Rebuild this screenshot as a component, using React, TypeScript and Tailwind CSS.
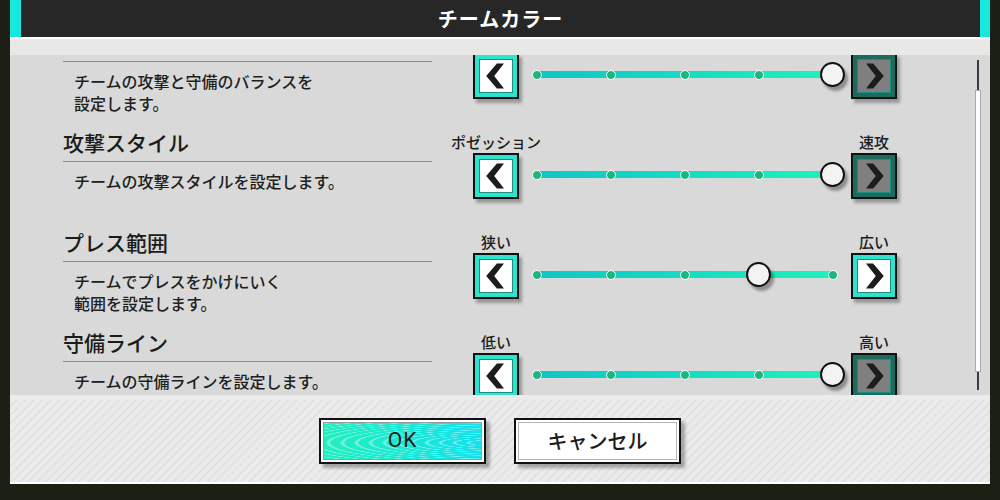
import React from 'react';

type Row = {
  title: string;
  desc: string[];
  left: string;
  right: string;
  value: number; // 0..4
};

// first row is scrolled up: its heading and labels sit above the visible area
const rows: Row[] = [
  { title: '', desc: ['チームの攻撃と守備のバランスを', '設定します。'], left: '', right: '', value: 4 },
  { title: '攻撃スタイル', desc: ['チームの攻撃スタイルを設定します。'], left: 'ポゼッション', right: '速攻', value: 4 },
  { title: 'プレス範囲', desc: ['チームでプレスをかけにいく', '範囲を設定します。'], left: '狭い', right: '広い', value: 3 },
  { title: '守備ライン', desc: ['チームの守備ラインを設定します。'], left: '低い', right: '高い', value: 4 },
];

const jp = "font-['Noto_Sans_CJK_JP','Noto_Sans',sans-serif]";

const Chevron: React.FC<{ dir: 'left' | 'right' }> = ({ dir }) => (
  <svg width="36" height="36" viewBox="0 0 36 36">
    {dir === 'left' ? (
      <polygon points="7,18 19,4 27,4 16,18 27,32 19,32" fill="#1c1c1c" />
    ) : (
      <polygon points="29,18 17,4 9,4 20,18 9,32 17,32" fill="#1c1c1c" />
    )}
  </svg>
);

const ArrowButton: React.FC<{ dir: 'left' | 'right'; disabled?: boolean }> = ({ dir, disabled }) => (
  <button
    className={
      'w-[46px] h-[46px] shrink-0 border-2 border-[#111] p-[4px] shadow-[3px_4px_3px_rgba(0,0,0,0.3)] ' +
      (disabled ? 'bg-[#1d6b5d]' : 'bg-[#2fe3cf]')
    }
  >
    <div
      className={
        'w-full h-full flex items-center justify-center border border-[#1a8f80] ' +
        (disabled ? 'bg-[#7f7f7f]' : 'bg-white')
      }
    >
      <Chevron dir={dir} />
    </div>
  </button>
);

const Slider: React.FC<{ value: number }> = ({ value }) => (
  <div className="flex-1 px-[18px] -mt-[4px]">
    <div className="relative h-[8px]">
      <div className="absolute inset-x-0 top-[1px] h-[7px] rounded-full bg-gradient-to-r from-[#0fc6c6] to-[#1ef2bc]" />
      {[0, 1, 2, 3, 4].map((i) => (
        <div
          key={i}
          className="absolute -top-[0.5px] w-[10px] h-[10px] -ml-[5px] rounded-full bg-[#1fb67e] border border-white"
          style={{ left: `${i * 25}%` }}
        />
      ))}
      <div
        className="absolute -top-[8px] w-[25px] h-[25px] -ml-[13px] rounded-full border-2 border-[#111] bg-[#f3f3f3] shadow-[3px_4px_3px_rgba(0,0,0,0.35)]"
        style={{ left: `${value * 25}%` }}
      />
    </div>
  </div>
);

const SettingRow: React.FC<{ row: Row }> = ({ row }) => (
  <div className="flex h-[100px]">
    <div className="w-[369px]">
      <div className="h-[31px] border-b border-[#8d8d8d] text-[21px] leading-[22px] font-medium text-[#1b1b1b]">
        {row.title}
      </div>
      <div className="mt-[8px] pl-[11px] text-[16px] leading-[22px] font-medium text-[#1e1e1e]">
        {row.desc.map((d) => (
          <div key={d}>{d}</div>
        ))}
      </div>
    </div>
    <div className="ml-[41px] w-[424px]">
      <div className="flex h-[22px] justify-between text-[15px] leading-[22px] font-medium text-[#1b1b1b]">
        <div className="w-[46px] flex justify-center whitespace-nowrap">{row.left}</div>
        <div className="w-[46px] flex justify-center whitespace-nowrap">{row.right}</div>
      </div>
      <div className="flex items-center h-[46px]">
        <ArrowButton dir="left" disabled={row.value === 0} />
        <Slider value={row.value} />
        <ArrowButton dir="right" disabled={row.value === 4} />
      </div>
    </div>
  </div>
);

export default function App() {
  return (
    <div className={`w-[1000px] h-[500px] bg-[#1c1f14] overflow-hidden ${jp}`}>
      <div className="mx-[10px] w-[980px]">
        {/* header */}
        <div className="flex h-[37px]">
          <div className="w-[11px] bg-[#16e8de]" />
          <div className="flex-1 bg-[#272727] flex items-center justify-center text-white text-[20px] font-bold tracking-[1px]">
            チームカラー
          </div>
          <div className="w-[10px] bg-[#16e8de]" />
        </div>
        <div className="h-[18px] border-t-2 border-white bg-[#e8e8e6]" />

        {/* content */}
        <div className="relative h-[340px] bg-[#d9d9d9] overflow-hidden">
          <div className="pl-[53px] -mt-[24px]">
            {rows.map((r, i) => (
              <SettingRow key={i} row={r} />
            ))}
          </div>
          <div className="absolute left-[964px] top-[5px] flex flex-col items-center w-[8px]">
            <div className="w-[2px] h-[30px] bg-[#3c3c3c]" />
            <div className="w-[6px] h-[282px] bg-white border border-[#a9a9a9]" />
            <div className="w-[2px] h-[18px] bg-[#3c3c3c]" />
          </div>
        </div>

        {/* footer */}
        <div className="h-[89px] border-b-2 border-white bg-[#ebebeb] pt-[5px]">
          <div className="h-full flex items-center justify-center gap-[28px] bg-[image:repeating-linear-gradient(135deg,#ebebeb_0px,#ebebeb_4px,#e2e2e2_4px,#e2e2e2_6px)]">
            <button className="w-[167px] h-[46px] border-2 border-[#111] bg-white p-[2px] shadow-[4px_4px_3px_rgba(0,0,0,0.3)]">
              <div className="w-full h-full flex items-center justify-center border border-[#9a9a9a] bg-[image:repeating-radial-gradient(ellipse_at_108%_55%,rgba(255,255,255,0)_0px,rgba(255,255,255,0)_8px,rgba(255,255,255,0.45)_11px,rgba(255,255,255,0)_14px),linear-gradient(90deg,#22efbf,#18e8d6_55%,#12e2ee)] text-[21px] font-normal text-[#1b1b1b] font-['Roboto',sans-serif] tracking-[1px]">
                OK
              </div>
            </button>
            <button className="w-[167px] h-[46px] border-2 border-[#111] bg-white p-[2px] shadow-[4px_4px_3px_rgba(0,0,0,0.3)]">
              <div className="w-full h-full flex items-center justify-center border border-[#b5b5b5] bg-white text-[20px] font-medium text-[#1b1b1b]">
                キャンセル
              </div>
            </button>
          </div>
        </div>
      </div>
    </div>
  );
}
